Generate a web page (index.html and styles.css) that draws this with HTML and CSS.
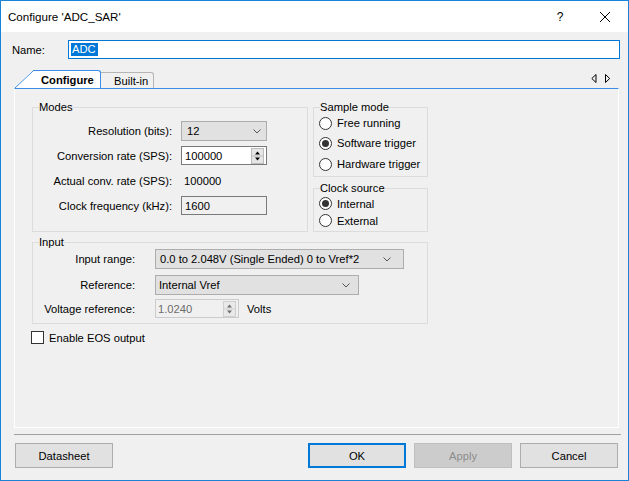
FILE: index.html
```html
<!DOCTYPE html>
<html>
<head>
<meta charset="utf-8">
<title>Configure 'ADC_SAR'</title>
<link rel="stylesheet" href="styles.css">
</head>
<body>
<div class="window">
  <div class="titlebar">
    <span class="title">Configure 'ADC_SAR'</span>
    <span class="help">?</span>
    <svg class="close" width="10" height="10" viewBox="0 0 10 10"><path d="M0 0L10 10M10 0L0 10" stroke="#000" stroke-width="1"/></svg>
  </div>

  <div class="name-row">
    <span class="name-label">Name:</span>
    <div class="name-input"><span class="sel">ADC</span></div>
  </div>

  <div class="tabs">
    <div class="tab-slant"></div>
    <div class="tab active">Configure</div>
    <div class="tab inactive">Built-in</div>
    <svg class="tab-arrows" width="20" height="10" viewBox="0 0 20 10">
      <path d="M5 0.5L0.8 4.5L5 8.5Z" fill="none" stroke="#000" stroke-width="1"/>
      <path d="M14.5 0.5L18.7 4.5L14.5 8.5Z" fill="none" stroke="#000" stroke-width="1"/>
    </svg>
  </div>

  <div class="panel">
    <div class="top-grid">
      <fieldset class="group modes">
        <legend>Modes</legend>
        <div class="form modes-form">
          <span class="lbl">Resolution (bits):</span>
          <div class="combo"><span>12</span><svg width="8" height="5" viewBox="0 0 8 5"><path d="M0.5 0.5L4 4L7.5 0.5" fill="none" stroke="#555"/></svg></div>

          <span class="lbl">Conversion rate (SPS):</span>
          <div class="textbox spin"><span>100000</span>
            <svg width="13" height="16" viewBox="0 0 13 16"><rect x="0.5" y="0.5" width="12" height="15" fill="#e6e6e6" stroke="#bcbcbc"/><line x1="1" y1="8" x2="12" y2="8" stroke="#bcbcbc"/><path d="M4 6.5L6.5 3.5L9 6.5Z" fill="#000"/><path d="M4 9.5L6.5 12.5L9 9.5Z" fill="#000"/></svg>
          </div>

          <span class="lbl">Actual conv. rate (SPS):</span>
          <span class="value">100000</span>

          <span class="lbl">Clock frequency (kHz):</span>
          <div class="textbox readonly"><span>1600</span></div>
        </div>
      </fieldset>

      <div class="right-col">
        <fieldset class="group sample">
          <legend>Sample mode</legend>
          <div class="radio"><span class="dot"></span>Free running</div>
          <div class="radio"><span class="dot on"></span>Software trigger</div>
          <div class="radio third"><span class="dot"></span>Hardware trigger</div>
        </fieldset>
        <fieldset class="group clock">
          <legend>Clock source</legend>
          <div class="radio"><span class="dot on"></span>Internal</div>
          <div class="radio"><span class="dot"></span>External</div>
        </fieldset>
      </div>
    </div>

    <fieldset class="group input">
      <legend>Input</legend>
      <div class="form input-form">
        <span class="lbl">Input range:</span>
        <div class="combo wide"><span>0.0 to 2.048V (Single Ended) 0 to Vref*2</span><svg width="8" height="5" viewBox="0 0 8 5"><path d="M0.5 0.5L4 4L7.5 0.5" fill="none" stroke="#555"/></svg></div>

        <span class="lbl">Reference:</span>
        <div class="combo mid"><span>Internal Vref</span><svg width="8" height="5" viewBox="0 0 8 5"><path d="M0.5 0.5L4 4L7.5 0.5" fill="none" stroke="#555"/></svg></div>

        <span class="lbl">Voltage reference:</span>
        <div class="volt-row">
          <div class="textbox spin disabled"><span>1.0240</span>
            <svg width="13" height="16" viewBox="0 0 13 16"><rect x="0.5" y="0.5" width="12" height="15" fill="#e9e9e9" stroke="#cfcfcf"/><line x1="1" y1="8" x2="12" y2="8" stroke="#cfcfcf"/><path d="M4 6.5L6.5 3.5L9 6.5Z" fill="#6d6d6d"/><path d="M4 9.5L6.5 12.5L9 9.5Z" fill="#6d6d6d"/></svg>
          </div>
          <span class="unit">Volts</span>
        </div>
      </div>
    </fieldset>

    <div class="check-row"><span class="checkbox"></span>Enable EOS output</div>
  </div>

  <div class="separator"></div>

  <div class="buttons">
    <div class="btn">Datasheet</div>
    <div class="btn ok">OK</div>
    <div class="btn disabled">Apply</div>
    <div class="btn">Cancel</div>
  </div>
</div>
</body>
</html>
```

FILE: styles.css
```css
html, body {
  margin: 0;
  padding: 0;
}
body {
  font-family: "Liberation Sans", Arial, sans-serif;
  font-size: 11.2px;
  color: #000;
  background: #f0f0f0;
}
.window {
  width: 629px;
  height: 481px;
  box-sizing: border-box;
  border: 1px solid #1883d7;
  background: #f0f0f0;
  display: flex;
  flex-direction: column;
  overflow: hidden;
}

/* title bar */
.titlebar {
  flex: none;
  height: 31px;
  background: #fff;
  display: flex;
  align-items: center;
  padding-left: 7px;
  padding-right: 18px;
}
.title {
  flex: 1;
  font-size: 11.6px;
}
.help {
  width: 10px;
  text-align: center;
  font-size: 12px;
  margin-right: 35px;
}
.close {
  display: block;
}

/* name row */
.name-row {
  flex: none;
  margin-top: 8px;
  height: 19px;
  display: flex;
  align-items: center;
  padding-left: 11px;
  padding-right: 8px;
}
.name-label {
  width: 56px;
}
.name-input {
  flex: 1;
  height: 19px;
  box-sizing: border-box;
  border: 1px solid #0078d7;
  background: #fff;
  display: flex;
  align-items: center;
}
.sel {
  margin-left: 2px;
  padding: 0 2px 0 1px;
  background: #0078d7;
  color: #fff;
  line-height: 13px;
}

/* tabs */
.tabs {
  flex: none;
  margin-top: 11px;
  height: 18px;
  display: flex;
  align-items: flex-end;
  padding-left: 14px;
  padding-right: 17px;
}
.tab-slant {
  width: 18px;
  height: 17px;
  background: linear-gradient(to bottom right, transparent calc(50% - 0.6px), #3a8ee6 50%, #fff calc(50% + 0.7px));
}
.tab {
  box-sizing: border-box;
  display: flex;
  align-items: center;
}
.tab.active {
  width: 68px;
  height: 18px;
  border-top: 1px solid #3a8ee6;
  border-right: 1px solid #3a8ee6;
  border-top-right-radius: 3px;
  background: #fff;
  font-weight: bold;
  padding-left: 8px;
}
.tab.inactive {
  width: 53px;
  height: 16px;
  border-top: 1px solid #b5b5b5;
  border-right: 1px solid #b5b5b5;
  border-top-right-radius: 3px;
  background: #f0f0f0;
  padding-left: 13px;
}
.tab-arrows {
  margin-left: auto;
  align-self: flex-start;
  margin-top: 4px;
}

/* panel */
.panel {
  flex: none;
  margin-left: 13px;
  width: 605px;
  height: 340px;
  box-sizing: border-box;
  border-top: 1px solid #3a8ee6;
  border-left: 1px solid #fff;
  border-right: 1px solid #fff;
  border-bottom: 1px solid #fff;
  background: #f0f0f0;
  padding: 11px 0 0 17px;
}
.top-grid {
  display: grid;
  grid-template-columns: 276px 115px;
  column-gap: 5px;
}
.group {
  margin: 0;
  padding: 0;
  border: 1px solid #dcdcdc;
  min-width: 0;
  box-sizing: border-box;
}
.group legend {
  margin-left: 6px;
  padding: 0;
  line-height: 14px;
}

.form {
  display: grid;
  align-items: start;
}
.lbl {
  height: 19px;
  display: flex;
  align-items: center;
  justify-content: flex-end;
  white-space: nowrap;
}
.modes {
  padding-bottom: 15px;
}
.modes-form {
  margin-top: 7px;
  grid-template-columns: 139px 86px;
  column-gap: 9px;
  grid-template-rows: 25px 25px 25px 19px;
}
.modes-form .lbl:first-child {
  height: 20px;
}
.value {
  height: 19px;
  display: flex;
  align-items: center;
  padding-left: 3px;
}

.combo {
  height: 20px;
  box-sizing: border-box;
  border: 1px solid #adadad;
  background: #e1e1e1;
  display: flex;
  align-items: center;
  padding-left: 5px;
  padding-right: 5px;
}
.combo span {
  flex: 1;
  white-space: nowrap;
}
.combo svg {
  display: block;
}
.textbox {
  height: 19px;
  box-sizing: border-box;
  border: 1px solid #7a7a7a;
  background: #fff;
  display: flex;
  align-items: center;
  padding-left: 3px;
  padding-right: 2px;
}
.textbox span {
  flex: 1;
}
.textbox svg {
  display: block;
}
.textbox.readonly {
  background: #f0f0f0;
}
.textbox.disabled {
  border-color: #cccccc;
  background: #f0f0f0;
  color: #6d6d6d;
  padding-left: 2px;
}

/* right column */
.right-col {
  display: flex;
  flex-direction: column;
}
.sample {
  padding-bottom: 2px;
}
.sample .radio {
  height: 20px;
}
.sample .radio:first-of-type {
  margin-top: -1px;
}
.sample .radio.third {
  margin-top: 1px;
}
.clock {
  margin-top: 4px;
  padding-bottom: 2px;
}
.clock .radio {
  height: 17px;
}
.radio {
  display: flex;
  align-items: center;
  white-space: nowrap;
  padding-left: 5px;
}
.dot {
  width: 13px;
  height: 13px;
  box-sizing: border-box;
  border: 1px solid #333;
  border-radius: 50%;
  background: #fff;
  margin-right: 5px;
  display: flex;
  align-items: center;
  justify-content: center;
  flex: none;
}
.dot.on::after {
  content: "";
  width: 7px;
  height: 7px;
  border-radius: 50%;
  background: #333;
}

/* input group */
.input {
  width: 396px;
  margin-top: 3px;
  padding-bottom: 5px;
}
.input-form {
  margin-top: 0;
  grid-template-columns: 102px auto;
  column-gap: 20px;
  grid-template-rows: 26px 24px 19px;
  justify-items: start;
}
.input-form .lbl {
  justify-self: stretch;
  height: 20px;
}
.combo.wide {
  width: 249px;
  padding-left: 4px;
  padding-right: 12px;
}
.combo.mid {
  width: 204px;
  padding-left: 3px;
  padding-right: 8px;
}
.volt-row {
  display: flex;
  align-items: center;
  height: 19px;
}
.volt-row .textbox {
  width: 84px;
}
.unit {
  margin-left: 8px;
}

.check-row {
  margin-top: 7px;
  margin-left: -1px;
  display: flex;
  align-items: center;
  height: 13px;
}
.checkbox {
  width: 13px;
  height: 13px;
  box-sizing: border-box;
  border: 1px solid #333;
  background: #fff;
  margin-right: 5px;
}

/* bottom */
.separator {
  flex: none;
  margin-top: 6px;
  margin-left: 13px;
  width: 607px;
  height: 1px;
  background: #a0a0a0;
}
.buttons {
  flex: none;
  margin-top: 8px;
  display: flex;
  padding-left: 14px;
  padding-right: 10px;
  gap: 8px;
}
.btn {
  width: 98px;
  height: 25px;
  box-sizing: border-box;
  border: 1px solid #adadad;
  background: #e1e1e1;
  display: flex;
  align-items: center;
  justify-content: center;
}
.btn.ok {
  margin-left: auto;
  border: 2px solid #0078d7;
}
.btn.disabled {
  background: #cccccc;
  border-color: #bfbfbf;
  color: #8d8d8d;
}
```
